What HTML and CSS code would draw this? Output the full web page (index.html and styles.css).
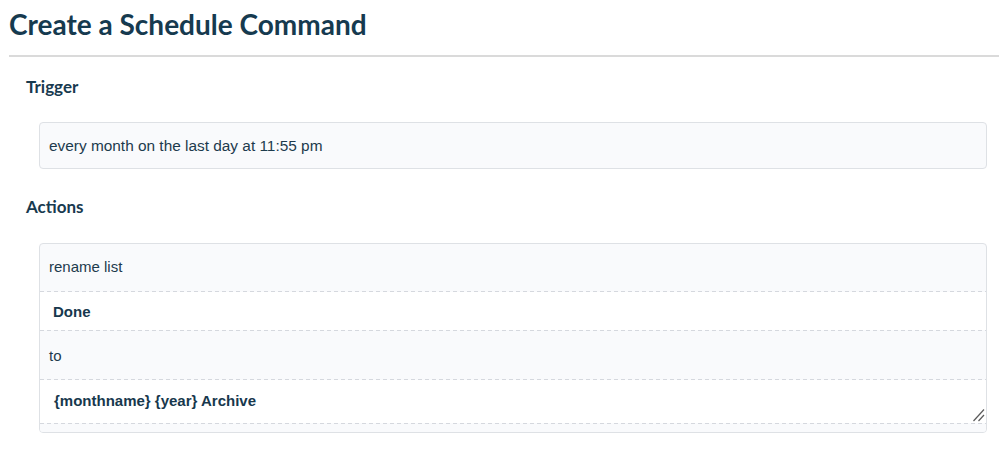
FILE: index.html
```html
<!DOCTYPE html>
<html lang="en">
<head>
<meta charset="utf-8">
<title>Create a Schedule Command</title>
<link rel="stylesheet" href="styles.css">
</head>
<body>
<div class="page">
  <h1 class="title">Create a Schedule Command</h1>
  <div class="rule"></div>
  <section class="section section-trigger">
    <h2 class="label">Trigger</h2>
    <div class="box trigger-box">every month on the last day at 11:55 pm</div>
  </section>
  <section class="section section-actions">
    <h2 class="label">Actions</h2>
    <div class="box actions-box">
      <div class="row row-text row-1">rename list</div>
      <div class="dash"></div>
      <div class="row row-input row-2">Done</div>
      <div class="dash"></div>
      <div class="row row-text row-3">to</div>
      <div class="dash"></div>
      <div class="row row-input row-4">{monthname} {year} Archive
        <svg class="grip" width="12" height="14" viewBox="0 0 12 14" aria-hidden="true">
          <line x1="0.5" y1="13" x2="11" y2="1.5" stroke="#5a5a5a" stroke-width="1.2"/>
          <line x1="5.5" y1="13" x2="11" y2="7" stroke="#5a5a5a" stroke-width="1.2"/>
        </svg>
      </div>
      <div class="dash"></div>
      <div class="row-foot"></div>
    </div>
  </section>
</div>
</body>
</html>
```
FILE: styles.css
```css
html, body {
  margin: 0;
  padding: 0;
  background: #ffffff;
}
.page {
  width: 999px;
  padding-left: 9px;
  box-sizing: border-box;
}
.title {
  margin: 0;
  padding-top: 7px;
  font-family: Lato, "Open Sans", sans-serif;
  font-weight: 700;
  font-size: 28px;
  line-height: 34px;
  color: #163a4f;
}
.rule {
  margin-top: 14px;
  height: 2px;
  background: #dadada;
}
.section {
  padding-left: 17px;
  padding-right: 12px;
}
.label {
  margin: 0;
  font-family: Lato, "Open Sans", sans-serif;
  font-weight: 700;
  font-size: 17px;
  line-height: 20px;
  color: #183a4f;
}
.section-trigger {
  padding-top: 20px;
}
.section-actions {
  padding-top: 28px;
}
.box {
  margin-left: 13px;
  margin-top: 25px;
  border: 1px solid #dee1e5;
  border-radius: 4px;
  background: #f9fafc;
  font-family: "Liberation Sans", Arial, sans-serif;
  font-size: 15px;
  line-height: 19px;
  color: #1d3b4d;
}
.section-actions .box {
  margin-top: 26px;
}
.trigger-box {
  padding: 13px 9px 13px;
  font-size: 15.4px;
}
.actions-box {
  overflow: hidden;
}
.row {
  padding-left: 9px;
  padding-right: 9px;
}
.row-input {
  background: #ffffff;
  font-weight: 700;
  color: #17384d;
}
.row-1 {
  padding-top: 13px;
  padding-bottom: 15px;
}
.row-2 {
  padding-top: 10px;
  padding-bottom: 9px;
  padding-left: 13px;
}
.row-3 {
  padding-top: 15px;
  padding-bottom: 14px;
}
.row-4 {
  position: relative;
  padding-top: 11px;
  padding-bottom: 13px;
  padding-left: 14px;
}
.grip {
  position: absolute;
  right: 1px;
  bottom: 1px;
}
.dash {
  height: 1px;
  background: repeating-linear-gradient(90deg, #d5d8de 0 4px, transparent 4px 7px);
}
.row-foot {
  height: 8px;
  background: #f9fafc;
}
```
